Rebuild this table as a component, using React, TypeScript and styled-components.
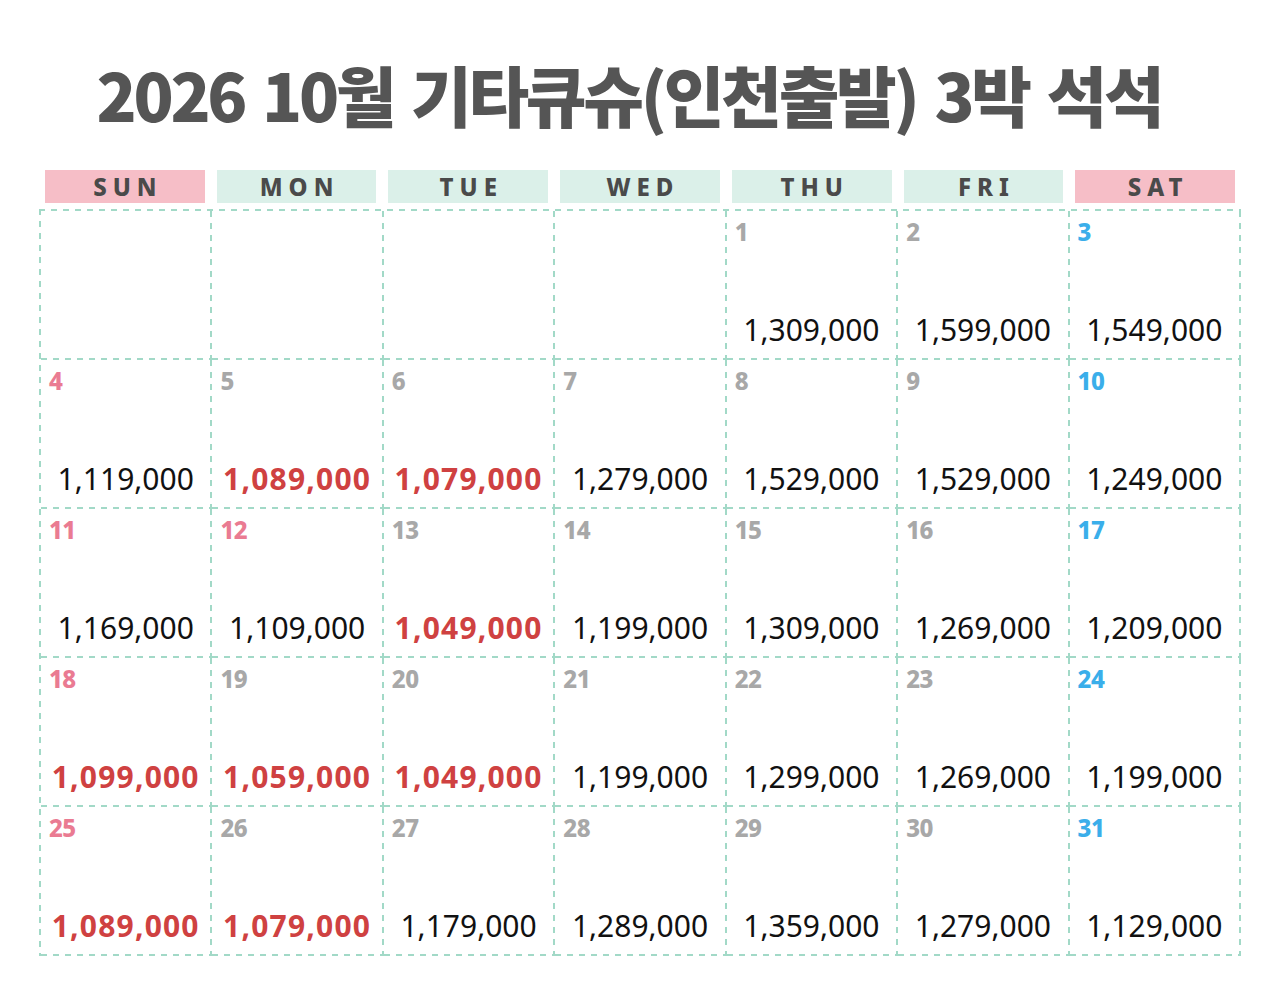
import React from "react";
import styled, { createGlobalStyle } from "styled-components";

const GlobalStyle = createGlobalStyle`
  html, body { margin: 0; padding: 0; background: #ffffff; }
  body { font-family: "Noto Sans", "Noto Sans CJK KR", sans-serif; }
`;

const LINE = "#a2d9c7";
const hDash = `repeating-linear-gradient(to right, ${LINE} 0 6px, transparent 6px 12px)`;
const vDash = `repeating-linear-gradient(to bottom, ${LINE} 0 6px, transparent 6px 12px)`;

const Page = styled.div`
  width: 1280px;
  height: 989px;
  box-sizing: border-box;
  padding: 47px 39px 0 39px;
  background: #fff;
`;

const Title = styled.h1`
  margin: 0;
  height: 123px;
  text-align: center;
  font-family: "Noto Sans CJK KR", sans-serif;
  font-weight: 900;
  font-size: 66px;
  line-height: 92px;
  letter-spacing: -3.3px;
  word-spacing: 6px;
  color: #555555;
  padding-right: 22px;
`;

const Columns = styled.div`
  display: grid;
  grid-template-columns: repeat(7, 1fr);
  width: 1202px;
`;

const HeaderRow = styled(Columns)`
  margin-bottom: 6px;
`;

const HeaderCell = styled.div<{ $weekend: boolean }>`
  padding: 0 6px;
  & > span {
    display: flex;
    align-items: center;
    justify-content: center;
    height: 33px;
    background: ${(p) => (p.$weekend ? "#f6bec7" : "#dbf0e9")};
    font-family: "Noto Sans", sans-serif;
    font-weight: 800;
    font-size: 24px;
    letter-spacing: 6px;
    padding-left: 6px;
    color: #4a4a4a;
  }
`;

const Grid = styled(Columns)`
  box-sizing: border-box;
  padding: 2px 0 0 2px;
  background-image: ${hDash}, ${vDash};
  background-size: 100% 2px, 2px 100%;
  background-position: left top, left top;
  background-repeat: no-repeat;
`;

const Cell = styled.div`
  height: 149px;
  box-sizing: border-box;
  display: flex;
  flex-direction: column;
  justify-content: space-between;
  padding: 6px 2px 12px 8px;
  background-image: ${vDash}, ${hDash};
  background-size: 2px 100%, 100% 2px;
  background-position: right top, left bottom;
  background-repeat: no-repeat;
`;

type Tone = "gray" | "pink" | "blue";

const DateNum = styled.div<{ $tone: Tone }>`
  font-family: "Noto Sans", sans-serif;
  font-weight: 800;
  font-size: 24px;
  line-height: 30px;
  letter-spacing: -0.5px;
  color: ${(p) =>
    p.$tone === "pink" ? "#ea7b92" : p.$tone === "blue" ? "#3aaeea" : "#a8a8a8"};
`;

const Price = styled.div<{ $hot: boolean }>`
  text-align: center;
  padding-right: 8px;
  font-family: "Noto Sans", sans-serif;
  font-size: 30px;
  line-height: 36px;
  font-weight: ${(p) => (p.$hot ? 700 : 400)};
  color: ${(p) => (p.$hot ? "#cf4141" : "#111111")};
  letter-spacing: ${(p) => (p.$hot ? "1.2px" : "0px")};
`;

type Day = { d: number; price: string; hot?: boolean; tone: Tone } | null;

const days: Day[] = [
  null, null, null, null,
  { d: 1, price: "1,309,000", tone: "gray" },
  { d: 2, price: "1,599,000", tone: "gray" },
  { d: 3, price: "1,549,000", tone: "blue" },
  { d: 4, price: "1,119,000", tone: "pink" },
  { d: 5, price: "1,089,000", hot: true, tone: "gray" },
  { d: 6, price: "1,079,000", hot: true, tone: "gray" },
  { d: 7, price: "1,279,000", tone: "gray" },
  { d: 8, price: "1,529,000", tone: "gray" },
  { d: 9, price: "1,529,000", tone: "gray" },
  { d: 10, price: "1,249,000", tone: "blue" },
  { d: 11, price: "1,169,000", tone: "pink" },
  { d: 12, price: "1,109,000", tone: "pink" },
  { d: 13, price: "1,049,000", hot: true, tone: "gray" },
  { d: 14, price: "1,199,000", tone: "gray" },
  { d: 15, price: "1,309,000", tone: "gray" },
  { d: 16, price: "1,269,000", tone: "gray" },
  { d: 17, price: "1,209,000", tone: "blue" },
  { d: 18, price: "1,099,000", hot: true, tone: "pink" },
  { d: 19, price: "1,059,000", hot: true, tone: "gray" },
  { d: 20, price: "1,049,000", hot: true, tone: "gray" },
  { d: 21, price: "1,199,000", tone: "gray" },
  { d: 22, price: "1,299,000", tone: "gray" },
  { d: 23, price: "1,269,000", tone: "gray" },
  { d: 24, price: "1,199,000", tone: "blue" },
  { d: 25, price: "1,089,000", hot: true, tone: "pink" },
  { d: 26, price: "1,079,000", hot: true, tone: "gray" },
  { d: 27, price: "1,179,000", tone: "gray" },
  { d: 28, price: "1,289,000", tone: "gray" },
  { d: 29, price: "1,359,000", tone: "gray" },
  { d: 30, price: "1,279,000", tone: "gray" },
  { d: 31, price: "1,129,000", tone: "blue" },
];

const weekdays = ["SUN", "MON", "TUE", "WED", "THU", "FRI", "SAT"];

export default function App() {
  return (
    <>
      <GlobalStyle />
      <Page>
        <Title>2026 10월 기타큐슈(인천출발) 3박 석석</Title>
        <HeaderRow>
          {weekdays.map((w, i) => (
            <HeaderCell key={w} $weekend={i === 0 || i === 6}>
              <span>{w}</span>
            </HeaderCell>
          ))}
        </HeaderRow>
        <Grid>
          {days.map((day, i) =>
            day ? (
              <Cell key={i}>
                <DateNum $tone={day.tone}>{day.d}</DateNum>
                <Price $hot={!!day.hot}>{day.price}</Price>
              </Cell>
            ) : (
              <Cell key={i} />
            )
          )}
        </Grid>
      </Page>
    </>
  );
}
